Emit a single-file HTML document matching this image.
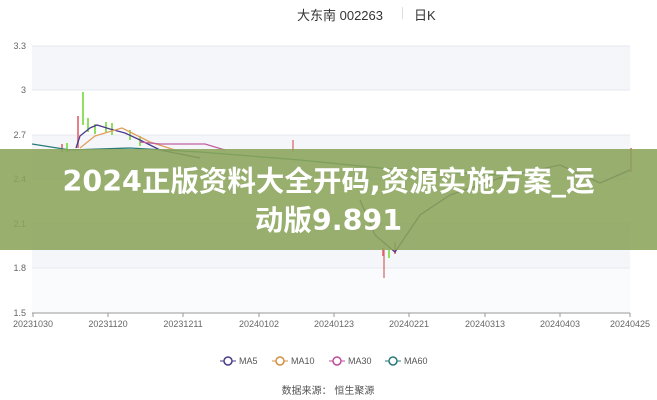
<!DOCTYPE html>
<html><head><meta charset="utf-8"><style>
body{margin:0;width:657px;height:400px;background:#fff;overflow:hidden;position:relative;font-family:"Liberation Sans","Noto Sans CJK SC",sans-serif}
.t{position:absolute;font-size:13px;color:#333}
.ban{position:absolute;left:0;top:149px;width:657px;height:101px;background:rgba(138,164,90,0.88);color:#fff;font-weight:bold;font-size:28.5px;text-align:center;line-height:39px;padding-top:13px;box-sizing:border-box;font-family:"DejaVu Sans","Noto Sans CJK SC",sans-serif;white-space:nowrap}
</style></head><body>
<div class="t" style="left:297px;top:5px">大东南 002263</div>
<div style="position:absolute;left:402px;top:7px;width:1px;height:12px;background:#ddd"></div>
<div class="t" style="left:414px;top:5px">日K</div>
<svg width="657" height="400" style="position:absolute;left:0;top:0" font-family="Liberation Sans" font-size="9" fill="#666">
<rect x="32" y="46" width="598" height="44" fill="#f5f6fa"/>
<rect x="32" y="135" width="598" height="44" fill="#f5f6fa"/>
<rect x="32" y="224" width="598" height="44" fill="#f5f6fa"/>
<rect x="32" y="268" width="598" height="45" fill="#fafbfc"/>
<g stroke="#e6e8ee"><line x1="32" y1="46" x2="630" y2="46"/><line x1="32" y1="90" x2="630" y2="90"/><line x1="32" y1="135" x2="630" y2="135"/><line x1="32" y1="179" x2="630" y2="179"/><line x1="32" y1="224" x2="630" y2="224"/><line x1="32" y1="268" x2="630" y2="268"/></g>
<line x1="32" y1="313" x2="630" y2="313" stroke="#999"/>
<g stroke="#999"><line x1="33" y1="313" x2="33" y2="317"/><line x1="108" y1="313" x2="108" y2="317"/><line x1="183" y1="313" x2="183" y2="317"/><line x1="259" y1="313" x2="259" y2="317"/><line x1="334" y1="313" x2="334" y2="317"/><line x1="409" y1="313" x2="409" y2="317"/><line x1="485" y1="313" x2="485" y2="317"/><line x1="560" y1="313" x2="560" y2="317"/><line x1="630" y1="313" x2="630" y2="317"/></g>
<g text-anchor="end"><text x="26" y="49">3.3</text><text x="26" y="93">3</text><text x="26" y="138">2.7</text><text x="26" y="182">2.4</text><text x="26" y="227">2.1</text><text x="26" y="271">1.8</text><text x="26" y="316">1.5</text></g>
<g text-anchor="middle"><text x="33" y="327">20231030</text><text x="108" y="327">20231120</text><text x="183" y="327">20231211</text><text x="259" y="327">20240102</text><text x="334" y="327">20240123</text><text x="409" y="327">20240221</text><text x="485" y="327">20240313</text><text x="560" y="327">20240403</text><text x="630" y="327">20240425</text></g>
<g stroke-width="2">
<line x1="62" y1="144" x2="62" y2="152" stroke="#e8808a"/><line x1="67" y1="143" x2="67" y2="152" stroke="#8fe060"/>
<line x1="78" y1="116" x2="78" y2="148" stroke="#e8808a"/><line x1="83" y1="92" x2="83" y2="125" stroke="#8fe060"/>
<line x1="88" y1="118" x2="88" y2="132" stroke="#8fe060"/><line x1="95" y1="124" x2="95" y2="134" stroke="#8fe060"/>
<line x1="106" y1="122" x2="106" y2="132" stroke="#8fe060"/><line x1="112" y1="123" x2="112" y2="135" stroke="#8fe060"/>
<line x1="130" y1="130" x2="130" y2="140" stroke="#8fe060"/><line x1="140" y1="136" x2="140" y2="146" stroke="#8fe060"/>
<line x1="383" y1="248" x2="383" y2="256" stroke="#e8808a"/><line x1="389" y1="250" x2="389" y2="258" stroke="#8fe060"/><line x1="395" y1="242" x2="395" y2="254" stroke="#e8808a"/>
<line x1="631" y1="148" x2="631" y2="172" stroke="#e8808a"/>
</g>
<line x1="384" y1="250" x2="384" y2="278" stroke="#c44" stroke-width="1"/>
<line x1="293" y1="140" x2="293" y2="152" stroke="#c44" stroke-width="1"/>
<g fill="none" stroke-width="1.3">
<polyline stroke="#4a3a8a" points="76,148 80,136 90,128 97,125 110,129 125,133 140,140 160,150 200,158"/>
<polyline stroke="#e0a060" points="80,148 95,136 122,128 150,142 175,150"/>
<polyline stroke="#c060a0" points="140,142 160,144 205,144 225,150"/>
<polyline stroke="#2a7a7a" points="32,144 70,150 130,148 200,152 300,160 400,170 500,175"/>
<polyline stroke="#4a3a8a" points="360,200 375,235 395,252 420,215 450,195 500,178 560,165 600,183 630,170"/>
</g>
<g font-size="9" fill="#555">
<line x1="220" y1="361" x2="236" y2="361" stroke="#4a3a8a"/><circle cx="228" cy="361" r="4" fill="#fff" stroke="#4a3a8a" stroke-width="1.5"/><text x="239" y="364">MA5</text>
<line x1="272" y1="361" x2="288" y2="361" stroke="#d09040"/><circle cx="280" cy="361" r="4" fill="#fff" stroke="#d09040" stroke-width="1.5"/><text x="291" y="364">MA10</text>
<line x1="329" y1="361" x2="345" y2="361" stroke="#c04a9a"/><circle cx="337" cy="361" r="4" fill="#fff" stroke="#c04a9a" stroke-width="1.5"/><text x="348" y="364">MA30</text>
<line x1="385" y1="361" x2="401" y2="361" stroke="#2a7a7a"/><circle cx="393" cy="361" r="4" fill="#fff" stroke="#2a7a7a" stroke-width="1.5"/><text x="404" y="364">MA60</text>
</g>
<text x="328" y="394" text-anchor="middle" font-family="Liberation Sans,Noto Sans CJK SC,sans-serif" font-size="10" fill="#555">数据来源：  恒生聚源</text>
</svg>
<div class="ban">2024正版资料大全开码,资源实施方案_运<br>动版9.891</div>
</body></html>
